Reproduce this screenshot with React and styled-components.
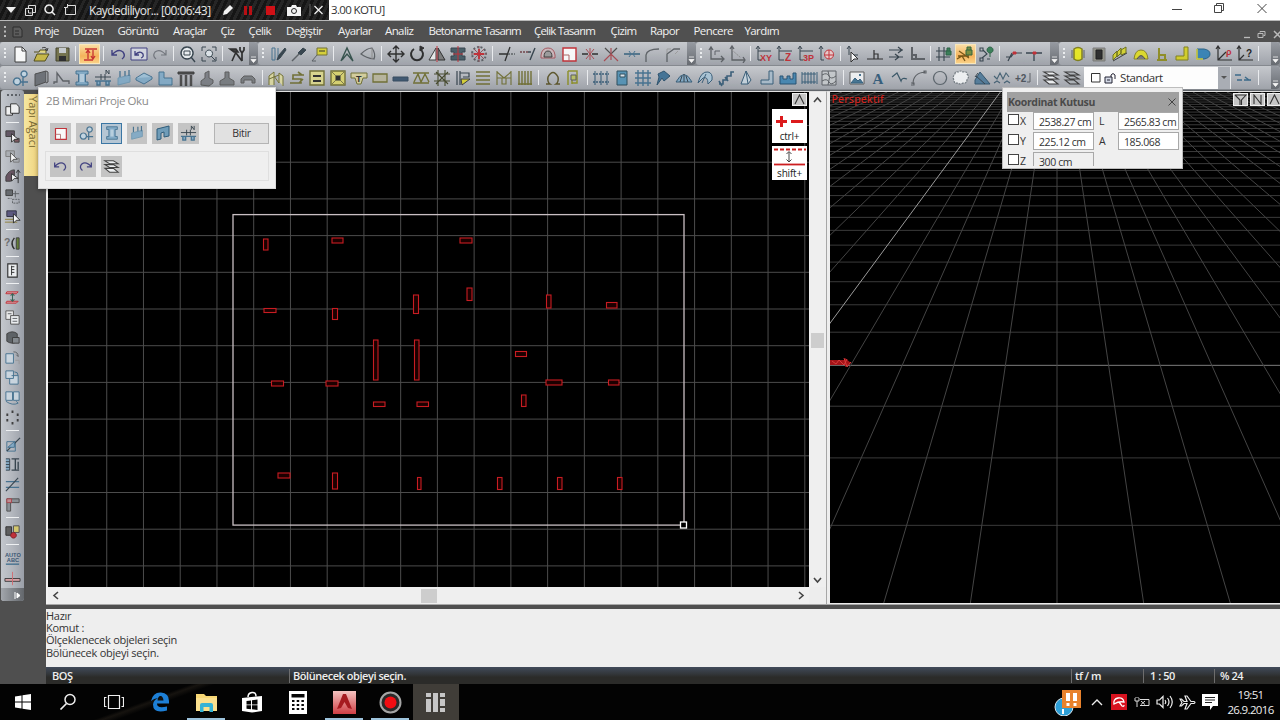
import styled, { createGlobalStyle, css } from "styled-components";

const GlobalStyle = createGlobalStyle`
  * { box-sizing: border-box; }
  body {
    margin: 0;
    overflow: hidden;
    background: #4d4d4d;
    font-family: "Open Sans", "Noto Sans", sans-serif;
  }
  svg { display: block; flex: none; }
`;

const D = "#2c3a44";
const B = "#3d6c8c";
const LB = "#7fa9c6";
const R = "#c2242c";
const Y = "#d9d22c";
const O = "#6b6a2a";
const G = "#55595e";
const N = "none";

// every glyph is a list of [path, stroke, fill, stroke width] or a text mark
const glyphs = {
  newFile: [["M4 2h7l4 4v11h-11z", "#333", "#fff"], ["M11 2v4h4", "#333", N]],
  open: [["M2 7h5l1-2h6v3", "#4a4410", "#e8dc7a"], ["M2 16l3-7h12l-4 7z", "#4a4410", "#c9b93e"], ["M10 3q4-2 5 2m-2-1l2 2l1-3", "#333", N]],
  save: [["M3 3h13v13h-13z", "#3a3a20", "#6f6d44"], ["M6 3h7v5h-7z", N, "#c8ccd0"], ["M6 11h7v5h-7z", N, "#222"]],
  level: [["M4 4h12M3 15h9", R, N, 1.5], ["M7 14v-8m-2 2l2-3l2 3M12 5v8m-2-2l2 3l2-3", R, N, 1.3]],
  undo: [["M3 5v5h5M3 10q6-7 11-3q3 4-1 7", "#35357a", N, 1.4]],
  undoBox: [["M1 3h16v12h-16z", "#35357a", "#d4d8e2"], ["M5 6v4h4M5 10q5-5 8-1q1 3-2 4", "#35357a", N, 1.3]],
  redo: [["M15 5v5h-5M15 10q-6-7-11-3q-3 4 1 7", "#6d7178", N, 1.2]],
  redoBlue: [["M15 5v5h-5M15 10q-6-7-11-3q-3 4 1 7", "#35357a", N, 1.4]],
  zoom: [["M8 2a6 6 0 1 0 .1 0M12 12l4 5", D, "#eef2f5", 1.4], ["M5 6h6v4h-6z", D, N]],
  fit: [["M2 6v-4h4M12 2h4v4M16 12v4h-4M6 16h-4v-4", D, N], ["M9 5a3.5 3.5 0 1 0 .1 0M11 11l4 4", D, "#dfe6ec"]],
  tools: [["M2 4h6l2 3h-4zM4 16l4-9", "#222", "#333", 1.6], ["M8 8l6 8M14 16v-8l-2-3v-3M16 2v3l-2 3", "#222", N, 1.7]],
  section: [["M3 3v12M6 3v12M9 3v12M3 15h3M3 3h3", B, N], ["M8 15l2-5l6-7l1 2l-6 8z", D, D]],
  brush: [["M2 16l7-7", G, N, 1.5], ["M8 8l5-5l3 2l-5 5z", D, D]],
  label: [["M7 3h10v7h-10z", O, Y], ["M7 10l-5 6h4", G, N], ["M9 6h6", "#222", N]],
  angle: [["M3 16l6-13l6 13l-6-7l-5 6", "#2c4a44", N, 1.4]],
  rotate3d: [["M2 9q6-6 11-6q4 6 2 11q-8-1-13-5z", G, N, 1.2], ["M13 3v11", "#888", N]],
  move: [["M9 1v16M1 9h16M6 4l3-3l3 3M6 14l3 3l3-3M4 6l-3 3l3 3M14 6l3 3l-3 3", "#222", N, 1.4]],
  rotate: [["M6 4a6 6 0 1 0 6 0", "#222", N, 2], ["M12 1v5l4-3z", "#222", "#222"]],
  mirror: [["M8 3v12h-7z", "#333", "#eee"], ["M10 3v12h7z", "#222", "#777"], ["M9 1v16", R, N]],
  align: [["M2 3h14v4h-3v4h3v4h-14v-4h3v-4h-3z", D, "#3f5660"], ["M9 1v16M4 9h10", R, N]],
  burst: [["M9 2a7 7 0 1 0 .1 0", G, N, 2, "2 2"], ["M9 1v16M1 9h16M4 4l10 10M14 4l-10 10", "#8a5058", N, 1], ["M9 4v10M4 9h10", R, N, 1.8]],
  trim: [["M1 9h8M7 16l5-14", "#222", N, 1.3], ["M10 9h7", G, N, 1.3, "2 1"]],
  extend: [["M9 7h3M11 15l5-12", D, N, 1.4], ["M1 7h8", "#6b3a40", N, 1.3, "2 1"]],
  offset: [["M2 13h14v-3q-1-7-7-7t-7 7z", "#a35058", "#cdb7bb"], ["M5 12h8q0-6-4-6t-4 6", "#333", "#999"]],
  scale: [["M3 3h13v13h-13z", R, "#fff", 1.4], ["M3 10h6v6", "#aa6060", N]],
  cross: [["M1 9h6M11 9h6", "#222", N, 1.5], ["M5 4l4 5l4-5M5 14l4-5l4 5M9 3v12", "#a8434b", N]],
  xcut: [["M3 3l6 6l6-6", "#444", N, 1.2], ["M2 16l7-7l7 7M9 3v12", "#a8434b", N, 1.2]],
  join: [["M1 9h16", "#2b5a78", N, 1.5], ["M6 6l2 3l-2 3M12 6l-2 3l2 3", B, N]],
  fillet: [["M3 17v-7q1-6 13-6", G, N, 1.3]],
  chamfer: [["M3 17v-8l7-5h6", G, N, 1.3], ["M3 4h4M3 4v4M11 9l3-3", "#999", N]],
  axes: [["M4 3v11h12M2 5l2-3l2 3M14 11l3 3l-3 3", G, N, 1.3], ["M8 10v-4h5", G, N]],
  axes2: [["M4 2v13h13M2 4l2-3l2 3M15 12l2 3l-2 3", G, N, 1.3], ["M4 5l9 8", "#888", N, 1, "2 1"]],
  cxy: [["M3 2v13h3M1 4l2-3l2 3M3 6h13", D, N], { t: "XY", x: 5, y: 16, c: R, s: 9 }],
  cz: [["M3 2v13h5M1 4l2-3l2 3M3 6h13", D, N], { t: "Z", x: 9, y: 16, c: R, s: 10 }],
  c3p: [["M3 2v13h3M1 4l2-3l2 3M3 6h13", D, N], { t: "3P", x: 6, y: 16, c: R, s: 9 }],
  corigin: [["M3 2v13h3M1 4l2-3l2 3", D, N], ["M11 5a4.5 4.5 0 1 0 .1 0M6 10h10M11 5v9", R, "#eecccc"]],
  cursorAxis: [["M4 2v8M2 4l2-3l2 3M8 10h5", D, N], ["M6 7v10l3-3h4z", "#222", "#fff"]],
  ortho: [["M1 14h16M8 14v-9M8 9h4v5", "#222", N, 1.2]],
  parallel: [["M2 5h14M2 12h14M11 2l4 3l-4 3M8 9l4 3l-4 3", D, N, 1.2]],
  corner: [["M4 2v12h13M4 10h4v4", G, N, 2]],
  snapGrid: [["M4 2v14M9 2v14M1 6h12M1 12h14", D, N, 1.1], ["M11 6h5v4h-5zM12 6v-3h3v3", "#1e5a3a", "#2f7a50"]],
  snap: [["M1 14l5-3l3 5M3 6l10 7M2 11h11", "#6b4d10", N, 1.3], ["M10 5h6v5h-6zM11 5v-3h4v3", "#1e5a3a", "#6b8a3c"]],
  snapPoint: [["M3 3h3v3h-3zM3 13h3v3h-3zM10 14h3M6 5l4 4l-5 4", D, N, 1.1], ["M13 2a3 3 0 1 0 .1 0M13 8v4", "#1e5a3a", "#2f7a50"]],
  nodeA: [["M1 12h5l3-4h8M3 16l4-8", D, N, 1.2], ["M8 7h3v2h-3z", R, R]],
  nodeB: [["M1 8h16M9 8v8", D, N, 1.3], ["M8 7h3v2h-3z", R, R]],
  drum: [["M5 4q4-3 8 0v10q-4 3-8 0z", "#7c7a10", "#eaea1a", 1.5], ["M3 5v8M15 5v8", G, N]],
  block: [["M3 3h12v13h-12z", "#777", "#8f8f85"], ["M6 5h6v9h-6z", "#111", "#222"]],
  ribs: [["M2 15v-5l4-4v5zM6 12v-5l4-4v5zM10 10v-5l5-3v6z", "#666a10", "#d6d42a"], ["M2 16l14-8", "#333", N]],
  arch: [["M2 14h14q-1-9-7-9t-7 9z", "#85801a", "#e0dc20"], ["M5 14q4-7 8 0", "#444", "#777"]],
  seat: [["M6 3v7h6v5M6 10v5M4 15h10", "#8c8a1a", N, 2]],
  lshape: [["M11 2h4v13h-12v-4h8z", "#7d7a10", "#d4d020"]],
  dshape: [["M3 4h7q6 1 6 5t-6 5h-7z", "#1f5a80", "#2f7fb4"], ["M3 4v10h6", Y, N, 1.5]],
  plotA: [["M3 2v13h14M3 15l8-8M1 4l2-3l2 3", "#222", N, 1.2], { t: "ρ", x: 11, y: 10, c: R, s: 9 }],
  plotB: [["M3 2v13h14M3 15l5-5M1 4l2-3l2 3", "#222", N, 1.2], { t: "?", x: 10, y: 12, c: "#111", s: 10 }],

  bubble: [["M6 9a3.5 3.5 0 1 0 .1 0M13 2a3 3 0 1 0 .1 0M9 13h8M12 8v9", B, "#c2d6e4", 1.4]],
  panel: [["M3 5l11-3v11l-11 4z", "#444", "#666b70"], ["M14 2l2 1v10l-2 1", "#444", "#94989c"]],
  polyline: [["M2 15v-2h3v-9l6 8h6v3", G, N, 1.3]],
  column: [["M3 2h12v3h-2.500v8h2.500v3h-12v-3h2.500v-8h-2.500z", B, LB], ["M8 5v8M10 5v8", "#e8f0f5", N]],
  beam: [["M1 12h16M3 12v4h3v-4M12 12v4h3v-4", B, LB, 1.4], ["M1 8h16M7 5v6M11 5v6M12 5v-4l3 4v-4", D, N]],
  slabLoad: [["M3 9l12-3v7l-12 3z", "#6a96b0", LB], ["M5 2v6M10 2v5M14 1v6", B, N, 1.3]],
  slab: [["M1 9l8-5l8 4l-8 5z", B, "#9cc0d6"], ["M1 9v2l8 4l8-5v-2", B, LB]],
  lslab: [["M3 3h5v6h8v7h-13z", B, LB]],
  pillars: [["M1 3h16v2h-16z", "#333", "#444"], ["M4 6v11M9 6v11M14 6v11", "#444", N, 2.5]],
  wall3: [["M3 16v-4l4-3v-5l4-2v7l4 2v3l-4 3z", "#555", "#777b80"]],
  footing: [["M7 3h4v6l5 3v4h-14v-4l5-3z", "#555", "#74787c"]],
  bridge: [["M2 14v-4l3-3h8l3 3v4h-3v-3h-8v3z", "#555", "#74787c"]],
  truss: [["M2 16v-9l5-4v13M7 7l5 7v-10l4 3v10M2 10l10-4", O, "#dcd9a0"]],
  stack: [["M2 14h11v-4h-9M5 10v-4h9l-4-3M16 6h-8M11 14l4-4", O, N, 1.6]],
  box2: [["M2 2h14v14h-14z", O, "#dbd78a", 1.4], ["M5 7h8M5 12h8", "#222", N, 2]],
  boxx: [["M2 2h14v14h-14z", O, "#d9d36a", 1.4], ["M2 2l14 14M16 2l-14 14", "#777440", N], ["M7 7h4v4h-4z", "#222", "#222"]],
  tload: [["M1 4h16v5h-4l-2 6h-4l-2-6h-4z", O, "#d5cf9a"], { t: "T", x: 6, y: 13, c: "#222", s: 9 }],
  plate: [["M2 5h14v8h-14z", O, "#b7b49a", 1.3]],
  bar: [["M2 8h15v4h-15z", "#2d4358", "#35506b"]],
  zig: [["M1 4h16M1 14h16M2 13l4-8l3 8l4-8l4 8", O, N, 1.4]],
  grid4: [["M5 1v16M12 1v16M1 5h16M1 12h16M3 3l12 12M15 3l-12 12", "#3c4020", N, 1.1]],
  profile: [["M3 2v14M6 2v14M6 4h9v4h-6", D, N, 1.2], ["M7 10h9l-8 6z", "#333", Y]],
  lines: [["M2 3h14M2 7h14M2 11h14M2 15h14", O, N, 1.5]],
  frame: [["M2 2v14M16 2v14M2 3l7 6l7-6M7 9h4v6h-4zM2 9h5M11 9h5", O, N, 1.1]],
  comb: [["M3 2v14M6 2v14M9 2v14M12 2v14M15 2v14M2 15h14", O, "#e0d98a", 1.4]],
  omega: [["M2 15h4q-3-2-2-7q5-9 10 0q1 5-2 7h4", "#554e20", N, 1.5]],
  green: [["M4 2v14M4 2h9v12h-5M8 6v9", "#8a8d20", N, 1.5], ["M7 6h5v5h-5z", "#555", "#b8c060"]],
  dims: [["M3 5v11M9 5v11M15 5v11", "#2f5672", N, 1.1], ["M1 5h16M1 13h16", "#2f5672", N, 1.3, "2 1"], ["M3 2v3M9 2v3M15 2v3", "#2f5672", N]],
  door: [["M4 2h10v14h-10z", "#245", "#4f90b4"], ["M7 5h5v3h-5z", "#245", "#dfe8ee"]],
  mesh: [["M4 1v16M9 1v16M14 1v16M1 4h16M1 9h16M1 14h16", B, N, 1.4]],
  pin: [["M4 5l6-3l6 5l-6 5l-2-3l-5 7l2-8z", "#234a66", "#396d92"]],
  dome: [["M1 13q8-15 16 0z", "#2f5672", LB], ["M5 13l2-6M9 13v-8M13 13l-2-6", D, N]],
  vault: [["M2 14q3-12 10-11q5 1 4 8l-4 4q0-8-5-6zM6 14l4-9", "#2f5672", "#a8c4d6"]],
  stairs: [["M2 15h4v-4h4v-4h4v-4h3M2 12l3 5M8 8l3 4", "#2f5672", N, 1.6]],
  cone: [["M9 2l-5 13h7zM9 2l5 9l-3 4", "#2f5672", "#c6d4de"]],
  elbow: [["M11 2h4v13h-12v-4h8z", "#2f5672", "#a8bccb"]],
  factory: [["M1 15v-8h3v3h4v-3h3v3h3v-6h3v11z", "#1d4b6c", "#3f83b0"]],
  fence: [["M2 3v12M5 3v12M8 3v12M11 3v12M14 3v12M17 3v12M2 5h14M2 13h14", "#2f5672", N]],
  terrain: [["M2 2h14v14h-14z", G, "#c5c9cc"], ["M2 6q5-3 7 1t7 0M2 12q5-3 7 1t7-1M8 2q3 6 0 14", G, N]],
  image: [["M2 3h14v12h-14z", "#555", "#f2f4f6"], ["M3 14l4-5l3 3l2-2l3 4z", "#2a5878", "#3d7090"], ["M12 5v2", B, N, 2]],
  letterA: [{ t: "A", x: 3.5, y: 15, c: "#2b5676", s: 15, serif: true }],
  curve: [["M2 8l5-4l4 8q1-4 6-2", "#2f4f60", N, 1.2]],
  arc: [["M3 15q0-11 12-12M1 14h3v2h-3M14 2h2v2h-2z", G, N, 1.1]],
  circle: [["M9 2.500a6.500 6.500 0 1 0 .1 0", "#555f66", N, 1.2]],
  cloud: [["M3 5q0-3 3-2q3-2 5 0q4-1 4 2q3 3 0 5q0 5-4 4q-3 2-5 0q-4 1-4-3q-2-3 1-6", "#6c757c", "#f2f4f6", 1.2, "2 1"]],
  hatch: [["M2 15v-4l5-8l10 12z", "#284c66", "#4d7898"], ["M3 7l9 8M5 4l-3 4", D, N]],
  wave: [["M1 7l3 3l3-6l3 6l3-6l3 4M1 14l3-2l3 2M11 14l3-2l3 2", "#3c5b6e", N, 1.1]],
  plus2: [{ t: "+2", x: 1, y: 13, c: "#444c54", s: 10 }, ["M16 4v9h-3", G, N]],
  layers: [["M2 3h9l5 3h-9zM2 7h9l5 3h-9zM2 11h9l5 4h-9z", "#333", "#f2f4f6", 1.1]],
  layersDark: [["M2 3h9l5 3h-9zM2 7h9l5 3h-9zM2 11h9l5 4h-9z", "#333", "#aeb3b8", 1.1]],
  dash: [["M1 6h6M3 11h5M10 11h7M11 8l4 3", "#2f6385", N, 1.3]],

  copyPages: [["M2 6h7v9h-7z", "#222", "#f6f6f6"], ["M7 3h6l3 3v7h-9z", "#222", "#f6f6f6"]],
  selectBlock: [["M2 3h9v6h-9z", "#333", "#5a4d5c"], ["M11 11h5v4h-5z", "#333", "#7a5058"], ["M8 6v9l3-3h4z", "#222", "#fff"]],
  selectLight: [["M2 3h9v6h-9zM10 11h6v4h-6z", "#777", "#a9adb2"], ["M7 5v10l3-3h4z", "#444", "#fff"]],
  selectUp: [["M2 9q3-7 9-7v6l-4 6h-5z", "#333", "#604a58"], ["M15 3v13M13 5l2-3l2 3", "#222", N], ["M8 6v8l3-3h4z", "#222", "#fff"]],
  copyMove: [["M2 2h7v6h-7z", "#333", "#5e6266"], ["M9 12h7v4h-7zM4 11h4", G, N, 1, "2 1"], ["M12 3v7M9 6h7", G, N]],
  cursorBlock: [["M3 3h10v6h-10z", "#223", "#54507a"], ["M1 12h13M1 15h13", "#8b7b30", N], ["M10 6v10l3-3h4z", "#222", "#fff"]],
  query: [{ t: "?", x: 0, y: 12, c: "#666", s: 11 }, ["M11 3q-5 6 0 12", "#222", N, 1.5], ["M13 3h3v12h-3z", "#333", "#5d7a2a"]],
  ruler: [["M4 2h10v14h-10z", "#222", "#f2f4f6", 1.2], ["M8 5h3M8 8h3M8 11h3M8 4v10", "#222", N]],
  story: [["M3 3h12l-2 2h-11zM3 13h12l-2 2h-11z", R, "#dba0a4"], ["M9 5v8M7 7l2-2l2 2M7 11l2 2l2-2", "#2c5c4c", N, 1.1]],
  pages: [["M2 2h8v9h-8z", "#555", "#eee"], ["M7 7h9v9h-9z", "#444", "#f2f4f6"], ["M9 10h5M9 13h5M4 5h4", G, N]],
  bucket: [["M3 5q6-4 11 0v8q-5 4-11 0z", "#333", "#555a5e"], ["M9 9h7v6h-7z", "#333", "#80868b"]],
  pageTurn: [["M2 5h8v10h-8z", B, "#ccd8e2"], ["M10 3q5 0 5 5l-2-2", G, N], ["M12 12h4v4", "#999", N]],
  pageSwap: [["M2 2h8v8h-8zM8 7h7v9h-9v-6", B, "#ccd8e2"], ["M11 3q4 0 4 4", B, N]],
  pageMirror: [["M2 3h7v9h-7zM10 3h6v9h-6z", B, "#ccd8e2"], ["M2 13q7 5 13 2l-2-2", B, N]],
  polar: [["M8 3h2M8 15h2M2.500 6h2M13.500 6h2M2.500 12h2M13.500 12h2", "#333", N, 2.6]],
  sweep: [["M3 6h9v10h-9z", B, N], ["M3 16l14-14", D, N, 1.3], ["M4 12l7-6v6z", B, LB]],
  textCol: [["M2 3h4v12h-4M2 6h4M2 9h4M2 12h4", D, LB], ["M8 3h8M8 15h8M12 3v12M15 6v8", D, N, 1.4]],
  split: [["M2 6h14M2 12h14", B, N, 1.4], ["M2 16l13-14", D, N, 1.2]],
  tee: [["M3 3h13v4h-9v9h-4z", "#444", "#878d93"], ["M3 3h5v4h-5z", "#a53840", "#c08a90"]],
  beads: [["M2 4h6v9h-6z", "#222", "#555"], ["M10 3h6v7h-6z", "#444", "#d8ca66"], ["M10 10a3 3 0 1 0 .1 0", "#7a1018", "#c2242c"]],
  autoAbc: [{ t: "AUTO", x: 1, y: 7, c: "#2f4f6e", s: 6 }, { t: "ABC", x: 3, y: 13, c: "#2f4f6e", s: 6 }, ["M2 15h14", B, N, 1.5]],
  levelLine: [["M1 9h16v3h-16z", "#333", "#dba0a4"], ["M9 2v14", "#d4666c", N]],
};

const GlyphSvg = styled.svg`
  opacity: 0.9;
`;

const Glyph = ({ name, size = 18 }) => (
  <GlyphSvg width={size} height={size} viewBox="0 0 18 18">
    {glyphs[name].map((g, i) =>
      Array.isArray(g) ? (
        <path key={i} d={g[0]} stroke={g[1]} fill={g[2]} strokeWidth={g[3] || 1} strokeDasharray={g[4]} />
      ) : (
        <text key={i} x={g.x} y={g.y} fill={g.c} fontSize={g.s} fontWeight="700"
          fontFamily={g.serif ? "Liberation Serif, serif" : "Liberation Sans, sans-serif"}>
          {g.t}
        </text>
      )
    )}
  </GlyphSvg>
);

const Screen = styled.div`
  width: 1280px;
  height: 720px;
  display: flex;
  flex-direction: column;
  overflow: hidden;
  position: relative;
  background: #4f4f4f;
`;

/* title bar */
const TitleBar = styled.div`
  height: 21px;
  flex: none;
  display: flex;
  background: #fff;
  border-bottom: 1px solid #b9b9b9;
  font-size: 12px;
  color: #333;
`;
const Recorder = styled.div`
  width: 329px;
  height: 20px;
  flex: none;
  display: flex;
  align-items: center;
  background: repeating-linear-gradient(115deg, #151515 0 3px, #262626 3px 6px);
  color: #e6e6e6;
`;
const RecorderSlot = styled.div`
  width: ${(p) => p.$w}px;
  flex: none;
  display: flex;
  justify-content: center;
`;
const RecorderText = styled.div`
  width: 134px;
  flex: none;
  padding-left: 11px;
  font-size: 12px;
  letter-spacing: -0.58px;
  white-space: nowrap;
`;
const FileName = styled.div`
  flex: 1;
  padding-left: 2px;
  line-height: 19px;
  font-size: 11.5px;
  letter-spacing: -0.65px;
`;
const WindowButtons = styled.div`
  display: flex;
  width: 130px;
  justify-content: space-between;
  padding: 2px 13px 0 22px;
`;

/* menu */
const MenuBar = styled.div`
  height: 21px;
  flex: none;
  display: flex;
  align-items: center;
  background: #505050;
  color: #f0f0f0;
  font-size: 11.5px;
  letter-spacing: -0.6px;
`;
const MenuStart = styled.div`
  width: 34px;
  padding-left: 4px;
  display: flex;
  align-items: center;
  gap: 6px;
`;
const MenuItem = styled.div`
  width: ${(p) => p.$w}px;
  white-space: nowrap;
  line-height: 16px;
  padding-bottom: 2px;
  letter-spacing: ${(p) => p.$ls || -0.6}px;
`;
const MdiButtons = styled.div`
  margin-left: auto;
  display: flex;
  gap: 6px;
  padding-top: 5px;
  margin-right: -2px;
`;

/* toolbars */
const ToolRow = styled.div`
  height: 24px;
  flex: none;
  display: flex;
  background: #85898f;
`;
const Bar = styled.div`
  width: ${(p) => p.$w}px;
  height: 23px;
  flex: none;
  display: flex;
  align-items: center;
  background: linear-gradient(#c6c9cd, #b5b8be 45%, #9fa3aa);
  border-radius: 3px 4px 4px 3px;
  overflow: hidden;
`;
const Grip = styled.div`
  width: ${(p) => p.$w || 9}px;
  height: 13px;
  flex: none;
  background: radial-gradient(circle at 5px 2px, #eef0f2 0.7px, #5d6167 1px, transparent 1.5px) 0 0 / 9px 4px repeat-y;
`;
const Tool = styled.div`
  width: ${(p) => p.$w}px;
  height: 20px;
  flex: none;
  display: flex;
  align-items: center;
  justify-content: center;
  ${(p) =>
    p.$on &&
    css`
      background: linear-gradient(#fbe0a8, #f5b35c 60%, #fbd58c);
      box-shadow: inset 0 0 0 1px #f8e7bb;
    `}
`;
const Sep = styled.div`
  width: 7px;
  height: 15px;
  flex: none;
  background: linear-gradient(#e9ebee, #e9ebee) 3px 0 / 1px 100% no-repeat;
`;
const More = styled.div`
  margin-left: auto;
  width: 9px;
  height: 23px;
  flex: none;
  display: flex;
  align-items: flex-end;
  justify-content: center;
  padding-bottom: 2px;
  background: linear-gradient(#979ba2, #676b71);
`;
const Combo = styled.div`
  width: 147px;
  height: 22px;
  margin-left: 2px;
  flex: none;
  display: flex;
  align-items: center;
  gap: 3px;
  padding-left: 7px;
  background: #fdfdfd;
  color: #333;
  font-size: 11.5px;
  letter-spacing: -0.45px;
`;
const ComboArrow = styled.div`
  margin-left: auto;
  width: 13px;
  height: 22px;
  display: flex;
  align-items: center;
  justify-content: center;
  background: #a9adb4;
  border-right: 1px solid #e8eaec;
`;

const barA = "newFile open save | level! | undo undoBox redo | zoom fit | tools";
const barB = "section brush label | angle rotate3d | move rotate mirror align burst | trim extend offset scale cross xcut join fillet chamfer";
const barC = "axes axes2 | cxy cz c3p corigin | cursorAxis ortho parallel corner | snapGrid snap! snapPoint | nodeA nodeB";
const barD = "drum block ribs arch seat lshape dshape plotA plotB |";
const barE =
  "bubble panel polyline column beam slabLoad slab lslab pillars wall3 footing bridge | " +
  "truss stack box2 boxx tload plate bar zig grid4 profile lines frame comb | omega green | " +
  "dims door mesh pin dome vault stairs cone elbow factory fence terrain | " +
  "image letterA curve arc circle cloud hatch wave plus2 | layers layersDark";

const Tools = ({ list, pitch }) =>
  list.split(" ").map((n, i) =>
    n === "|" ? (
      <Sep key={i} />
    ) : (
      <Tool key={i} $w={pitch} $on={n.endsWith("!")}>
        <Glyph name={n.replace("!", "")} />
      </Tool>
    )
  );

const MoreMark = () => (
  <More>
    <svg width="7" height="7" viewBox="0 0 7 7">
      <path d="M1 1h5M1 3.500h5l-2.500 3z" stroke="#f4f4f4" fill="#f4f4f4" strokeWidth="0.8" />
    </svg>
  </More>
);

/* work area */
const Work = styled.div`
  height: 594px;
  flex: none;
  display: flex;
`;
const Side = styled.div`
  width: 23px;
  height: 511px;
  margin-left: 1px;
  display: flex;
  flex-direction: column;
  align-items: center;
  background: linear-gradient(90deg, #c3c7cd, #b2b6bd 50%, #9a9fa8);
  border-radius: 3px;
  overflow: hidden;
`;
const SideGrip = styled.div`
  width: 14px;
  height: 9px;
  flex: none;
  background: radial-gradient(circle at 2px 5px, #5d6167 1px, transparent 1.4px) 0 0 / 4px 9px;
`;
const SideTool = styled.div`
  height: 20px;
  flex: none;
  display: flex;
  align-items: center;
`;
const SideSep = styled.div`
  width: 13px;
  height: 1px;
  margin: 3px 0;
  flex: none;
  background: #eef0f2;
`;
const SideMore = styled.div`
  margin-top: auto;
  width: 23px;
  height: 14px;
  flex: none;
  display: flex;
  align-items: center;
  justify-content: flex-end;
  padding-right: 3px;
  background: linear-gradient(90deg, #a2a6ac, #63676c);
`;
const Dock = styled.div`
  width: 22px;
  flex: none;
  padding-top: 4px;
`;
const DockTab = styled.div`
  width: 15px;
  height: 82px;
  padding-top: 2px;
  background: linear-gradient(90deg, #f6e7a0, #eed17c);
  writing-mode: vertical-rl;
  font-size: 11px;
  line-height: 12px;
  color: #7b6b35;
  white-space: nowrap;
`;
const Main = styled.div`
  width: 1234px;
  display: flex;
  flex-direction: column;
`;
const Views = styled.div`
  height: 515px;
  flex: none;
  display: flex;
  background: #ededed;
  border-top: 1px solid #62666b;
  border-bottom: 1px solid #a8a8a8;
`;
const Plan = styled.div`
  width: 780px;
  display: grid;
  grid-template: 495px 1fr / 761px 1fr;
  border-left: 2px solid #f2f2f2;
  border-top: 1px solid #e0e0e0;
  position: relative;
`;
const VScroll = styled.div`
  display: flex;
  flex-direction: column;
  align-items: center;
  justify-content: space-between;
  padding: 4px 1px 3px 0;
  background: #efefef;
`;
const HScroll = styled.div`
  display: flex;
  align-items: center;
  justify-content: space-between;
  padding: 0 4px;
  background: #efefef;
`;
const Thumb = styled.div`
  width: ${(p) => p.$w}px;
  height: ${(p) => p.$h}px;
  background: #cdcdcd;
`;
const Scene = styled.div`
  width: 454px;
  border-left: 1px solid #a6a6a6;
  padding-left: 3px;
  border-top: 1px solid #e0e0e0;
  position: relative;
`;
const HudColumn = styled.div`
  position: absolute;
  top: 1px;
  right: 19px;
  display: flex;
  flex-direction: column;
  align-items: flex-end;
`;
const HudCard = styled.div`
  width: 35px;
  height: 34px;
  margin-bottom: 3px;
  background: #fff;
  color: #222;
  font-size: 10px;
  line-height: 11px;
  letter-spacing: -0.2px;
  text-align: center;
`;
const CornerButtons = styled.div`
  position: absolute;
  top: 1px;
  right: -2px;
  display: flex;
  gap: 2px;
`;
const CornerButton = styled.div`
  width: 15px;
  height: 13px;
  display: flex;
  align-items: center;
  justify-content: center;
  background: #c6c6c6;
  border: 1px solid #f0f0f0;
  ${(p) => p.$gap && `margin-bottom: 3px;`}
`;

const columns = [
  [263.500, 239, 4.500, 11], [332, 238, 11, 5], [460, 238, 12, 5], [467, 288, 5, 12.500],
  [413.500, 295, 5, 18.500], [546.500, 295, 4.500, 13], [606.500, 302.500, 10.500, 5.500], [264, 308.500, 12, 4],
  [332.500, 308.500, 5, 11], [373.500, 340, 4.500, 40], [414.500, 340, 4.500, 40],
  [515.500, 351.500, 11, 5], [546, 380, 16, 5], [608.500, 380, 10.500, 5], [271.500, 381, 12, 5],
  [326, 381, 12, 5], [373.500, 402, 11.500, 4.500], [417, 402, 11.500, 4.500], [521.500, 395, 4.500, 11.500],
  [278, 473, 12, 5], [332.500, 473, 5, 16], [417.500, 477.500, 3.500, 12],
  [497.500, 477.500, 4.500, 12], [557.500, 477.500, 4.500, 12], [617.500, 477.500, 4.500, 12],
];

const range = (a, b) => Array.from({ length: b - a + 1 }, (_, i) => a + i);

const PlanDrawing = () => (
  <svg width="761" height="495" viewBox="48 92 761 495" style={{ background: "#000" }}>
    <path
      d={
        range(0, 20).map((i) => `M${70 + i * 36.740} 92v495`).join("") +
        range(0, 12).map((i) => `M48 ${125.500 + i * 36.700}h762`).join("")
      }
      stroke="#4c4c4c"
      fill="none"
    />
    {columns.map(([x, y, w, h]) => (
      <rect key={`${x}-${y}`} x={x} y={y} width={w} height={h} fill="#1c0000" stroke="#c81c22" strokeWidth="1.100" />
    ))}
    <rect x="233" y="214.600" width="451" height="310.500" fill="none" stroke="#c9bfc3" strokeWidth="1.300" />
    <rect x="680.500" y="522" width="6" height="6" fill="#000" stroke="#fff" strokeWidth="1.300" />
  </svg>
);

// ground grid seen from above: vanishing point and depth constants
const VX = 1057;
const VY = 15.2;
const rowY = (k) => VY + 3349 / (9.565 + k);
const gridX = (n, y) => VX + (51.6 * n * (y - VY)) / 350.1;

const SceneDrawing = () => (
  <svg width="450" height="511" viewBox="830 92 450 511" style={{ background: "#000" }}>
    {range(-3, 33).map((k) => (
      <path key={k} d={`M830 ${rowY(k)}H1280`} stroke={k === 0 ? "#7c7c7c" : "#3a3a3a"} />
    ))}
    {range(-22, 22).map((n) => (
      <path key={n} d={`M${gridX(n, 92)} 92L${gridX(n, 603)} 603`}
        stroke={n === -5 ? "#9a9a9a" : "#444"} />
    ))}
    <path d="M830 360h15v-2l6 5l-6 4v-2h-15z" fill="#a31418" />
    <path d="M832 361l4 3l3-4l5 5l3-6M844 358l3 9l4-5" stroke="#d83a3c" fill="none" />
    <text x="831.500" y="103" fontSize="10.500" fill="#e0231c" fontFamily="Noto Sans, sans-serif"
      textLength="52">Perspektif</text>
  </svg>
);

const Chevron = ({ d }) => (
  <svg width="9" height="9" viewBox="0 0 9 9">
    <path d={d} stroke="#444" strokeWidth="1.600" fill="none" />
  </svg>
);
const CornerGlyph = ({ d }) => (
  <svg width="13" height="11" viewBox="0 0 13 11">
    <path d={d} stroke="#333" strokeWidth="1.100" fill="none" />
  </svg>
);

/* bottom */
const Output = styled.div`
  height: 58px;
  flex: none;
  margin-top: 4px;
  padding: 1px 0 0;
  background: #eee;
  color: #333;
  font-size: 11px;
  line-height: 12.200px;
  letter-spacing: -0.260px;
`;
const StatusBar = styled.div`
  flex: 1;
  display: flex;
  align-items: center;
  background: linear-gradient(#414a5a, #33373b 40%, #2b2b29 60%);
  color: #eee;
  font-size: 11px;
  font-weight: 600;
  letter-spacing: -0.450px;
`;
const StatusCell = styled.div`
  width: ${(p) => p.$w}px;
  height: 14px;
  line-height: 14px;
  padding-left: ${(p) => p.$pad || 3}px;
  border-left: ${(p) => (p.$first ? "none" : "1px solid #6d6d6d")};
`;

/* taskbar */
const TaskBar = styled.div`
  height: 36px;
  flex: none;
  display: flex;
  align-items: stretch;
  background:
    linear-gradient(160deg, transparent 0 44%, #16130f 47%, transparent 52%) 60px 0 / 200px 100% no-repeat,
    #030303;
`;
const TaskItem = styled.div`
  width: ${(p) => p.$w || 46}px;
  display: flex;
  align-items: center;
  justify-content: center;
  background: ${(p) => (p.$active ? "#403d38" : "transparent")};
  ${(p) =>
    p.$open &&
    css`
      background: linear-gradient(#9dc3dc, #9dc3dc) center bottom / 38px 2px no-repeat;
    `}
`;
const Tray = styled.div`
  margin-left: auto;
  display: flex;
  align-items: center;
`;
const TraySlot = styled.div`
  width: ${(p) => p.$w || 22.6}px;
  display: flex;
  justify-content: center;
`;
const Clock = styled.div`
  width: 59px;
  color: #eee;
  font-size: 11.5px;
  line-height: 15.500px;
  letter-spacing: -0.650px;
  text-align: center;
`;

/* floating windows */
const ImportPanel = styled.div`
  position: absolute;
  left: 38px;
  top: 87px;
  width: 238px;
  height: 102px;
  background: #efefef;
  border: 1px solid #d9d9d9;
  box-shadow: 0 1px 4px rgba(0, 0, 0, 0.4);
`;
const ImportTitle = styled.div`
  height: 28px;
  padding-left: 7px;
  line-height: 26px;
  background: #fff;
  color: #8b8b8b;
  font-size: 11.5px;
  letter-spacing: -0.450px;
`;
const ImportTools = styled.div`
  display: flex;
  align-items: center;
  height: 34px;
  padding-left: 11px;
  gap: 4.900px;
`;
const ImportLower = styled.div`
  display: flex;
  align-items: center;
  height: 30px;
  margin: 1px 6px 0 6px;
  padding-left: 4px;
  gap: 4.900px;
  border: 1px solid #dfdfdf;
`;
const ImportButton = styled.div`
  width: 20.700px;
  height: 21px;
  display: flex;
  align-items: center;
  justify-content: center;
  background: ${(p) => (p.$on ? "#b5c6d4" : "#c4c4c4")};
  border: ${(p) => (p.$on ? "1px solid #3a76a4" : "none")};
`;
const FinishButton = styled.div`
  width: 55px;
  height: 21px;
  margin-left: 10.500px;
  background: #e1e1e1;
  border: 1px solid #b4b4b4;
  color: #333;
  font-size: 10.5px;
  line-height: 19px;
  letter-spacing: -0.350px;
  text-align: center;
`;
const CoordPanel = styled.div`
  position: absolute;
  left: 1002px;
  top: 87px;
  width: 181px;
  height: 82px;
  padding: 4px 3px 0 4px;
  background: #efefef;
  border: 1px solid #bdbdbd;
`;
const CoordTitle = styled.div`
  height: 20px;
  display: flex;
  align-items: center;
  justify-content: space-between;
  padding: 0 3px 1px 1px;
  background: #a0a0a0;
  color: #4a4a4a;
  font-size: 10.5px;
  font-weight: 700;
  letter-spacing: -0.350px;
`;
const CoordGrid = styled.div`
  display: grid;
  grid-template-columns: 26px 61px 24px 61px;
  grid-template-rows: 20px 20px 14px;
  color: #333;
  font-size: 10.5px;
  letter-spacing: -0.400px;
`;
const CoordAxis = styled.div`
  display: flex;
  align-items: flex-start;
  padding-top: 2px;
  line-height: 15px;
`;
const Check = styled.span`
  width: 11px;
  height: 11px;
  flex: none;
  margin: 0 1px 0 1px;
  background: #fff;
  border: 1px solid #444;
`;
const CoordValue = styled.div`
  height: 18px;
  padding-left: 5px;
  line-height: 18px;
  white-space: nowrap;
  background: #fff;
  border: 1px solid #a8a8a8;
  ${(p) =>
    p.$off &&
    css`
      height: 14px;
      background: #efefef;
      border-bottom: none;
    `}
`;
const CoordName = styled.div`
  padding-left: 5px;
  line-height: 19px;
`;

const menus = [
  ["Proje", 38.5], ["Düzen", 45], ["Görüntü", 55.5], ["Araçlar", 47.5], ["Çiz", 28], ["Çelik", 37.5],
  ["Değiştir", 52], ["Ayarlar", 47], ["Analiz", 43.5], ["Betonarme Tasarım", 105.5, -0.8],
  ["Çelik Tasarım", 76.5, -0.8], ["Çizim", 39.5], ["Rapor", 43.5], ["Pencere", 51], ["Yardım", 40],
];

const sideTools =
  "copyPages | selectBlock selectLight selectUp copyMove cursorBlock | query | ruler | " +
  "story pages bucket pageTurn pageSwap pageMirror polar | sweep textCol split tee | beads | autoAbc levelLine";

function App() {
  return (
    <>
      <GlobalStyle />
      <Screen>
        <TitleBar>
          <Recorder>
            <RecorderSlot $w={22}><svg width="10" height="8"><path d="M0 1h10l-5 6z" fill="#eee" /></svg></RecorderSlot>
            <RecorderSlot $w={16}><svg width="11" height="11"><path d="M3.500 3.500v-3h7v7h-3M.5 3.500h7v7h-7zM3.500 5v3h3" stroke="#ddd" fill="none" /></svg></RecorderSlot>
            <RecorderSlot $w={24}><svg width="12" height="12"><path d="M5 1a4 4 0 1 0 .1 0M8 8l3 3" stroke="#eee" strokeWidth="1.500" fill="none" /></svg></RecorderSlot>
            <RecorderSlot $w={16}><svg width="13" height="12"><path d="M3.500 1.500h8v9h-10v-7M3.500 0v3.500h-3.500" stroke="#ddd" fill="none" /></svg></RecorderSlot>
            <RecorderText>Kaydediliyor... [00:06:43]</RecorderText>
            <RecorderSlot $w={32}><svg width="13" height="12"><path d="M1 11l1-4l6-6l3 3l-6 6z" fill="#f2f2f2" /></svg></RecorderSlot>
            <RecorderSlot $w={8}><svg width="8" height="9"><path d="M1.500 0v9M6.500 0v9" stroke="#b80f14" strokeWidth="3" /></svg></RecorderSlot>
            <RecorderSlot $w={36}><svg width="9" height="9"><path d="M0 0h9v9h-9z" fill="#d01016" /></svg></RecorderSlot>
            <RecorderSlot $w={12}><svg width="14" height="11"><path d="M0 2h4l1-2h4l1 2h4v9h-14z" fill="#f2f2f2" /><circle cx="7" cy="6" r="2.500" fill="#f2f2f2" stroke="#222" /></svg></RecorderSlot>
            <RecorderSlot $w={29}><svg width="26" height="12"><path d="M8 0v12" stroke="#666" /><path d="M12.500 2l8 8M20.500 2l-8 8" stroke="#eee" strokeWidth="1.300" /></svg></RecorderSlot>
          </Recorder>
          <FileName>3.00 KOTU]</FileName>
          <WindowButtons>
            <svg width="10" height="12"><path d="M0 7.500h10" stroke="#444" /></svg>
            <svg width="11" height="12"><path d="M2.500 3v-1.500h7v7h-2M.5 3.500h7v7h-7z" stroke="#444" fill="none" /></svg>
            <svg width="10" height="12"><path d="M.5 2l9 9M9.500 2l-9 9" stroke="#444" /></svg>
          </WindowButtons>
        </TitleBar>

        <MenuBar>
          <MenuStart>
            <svg width="2" height="12"><path d="M1 0v12" stroke="#ddd" strokeWidth="1.500" strokeDasharray="2 2.500" /></svg>
            <svg width="11" height="12"><path d="M1 1h7l2 3v7h-9zM3 5h4M3 8h4" stroke="#2d2d2d" fill="#5c5c5c" /></svg>
          </MenuStart>
          {menus.map(([name, w, ls]) => <MenuItem key={name} $w={w} $ls={ls}>{name}</MenuItem>)}
          <MdiButtons>
            <svg width="9" height="9"><path d="M2 7.500h6" stroke="#bbb" strokeWidth="1.300" /></svg>
            <svg width="10" height="9"><path d="M3 2.500v-1h5v4h-1.500M1 3.500h5v4h-5z" stroke="#bbb" fill="none" /></svg>
            <svg width="9" height="9"><path d="M1 1l7 7M8 1l-7 7" stroke="#bbb" strokeWidth="1.500" /></svg>
          </MdiButtons>
        </MenuBar>

        <ToolRow>
          <Bar $w={258}><Grip /><Tools list={barA} pitch={21} /><MoreMark /></Bar>
          <Bar $w={438}><Grip $w={9.5} /><Tools list={barB} pitch={20.8} /><MoreMark /></Bar>
          <Bar $w={363}><Grip $w={9.5} /><Tools list={barC} pitch={20.75} /><MoreMark /></Bar>
          <Bar $w={221}><Grip /><Tools list={barD} pitch={20.8} /><MoreMark /></Bar>
        </ToolRow>
        <ToolRow>
          <Bar $w={1280}>
            <Grip $w={9.6} />
            <Tools list={barE} pitch={20.75} />
            <Combo>
              <svg width="10" height="10"><path d="M.5 .5h8.500v8.500h-8.500z" stroke="#333" fill="#fff" /></svg>
              <svg width="13" height="12"><path d="M1 5h7v6h-7z" stroke="#223" fill="#d4dae6" /><path d="M7 5v-2q2-3 4 0v4M3 8h3" stroke="#223" fill="none" /></svg>
              <span>Standart</span>
              <ComboArrow><svg width="6" height="4"><path d="M0 0h6l-3 3z" fill="#555" /></svg></ComboArrow>
            </Combo>
            <Tools list="dash |" pitch={24} />
            <MoreMark />
          </Bar>
        </ToolRow>

        <Work>
          <Side>
            <SideGrip />
            {sideTools.split(" ").map((n, i) =>
              n === "|" ? <SideSep key={i} /> : <SideTool key={i}><Glyph name={n} size={17} /></SideTool>
            )}
            <SideMore><svg width="7" height="7"><path d="M1 0v7M3 1l3 2.500l-3 2.500z" stroke="#fff" fill="#fff" /></svg></SideMore>
          </Side>
          <Dock><DockTab>Yapı Ağacı</DockTab></Dock>
          <Main>
            <Views>
              <Plan>
                <PlanDrawing />
                <VScroll>
                  <Chevron d="M1 6l3.500-4l3.500 4" />
                  <Thumb $w={13} $h={15} />
                  <Chevron d="M1 3l3.500 4l3.500-4" />
                </VScroll>
                <HScroll>
                  <Chevron d="M6 1l-4 3.500l4 3.500" />
                  <Thumb $w={16} $h={14} />
                  <Chevron d="M3 1l4 3.500l-4 3.500" />
                </HScroll>
                <HudColumn>
                  <CornerButton $gap><CornerGlyph d="M2 10l4.500-9l4.500 9" /></CornerButton>
                  <HudCard>
                    <svg width="35" height="22"><path d="M4 12.500h11M9.500 7v11M19 12.500h12" stroke="#dc1a1c" strokeWidth="3" /></svg>
                    ctrl+
                  </HudCard>
                  <HudCard>
                    <svg width="35" height="22"><path d="M2 3.500h32" stroke="#cc1e20" strokeWidth="1.800" strokeDasharray="4 2" /><path d="M2 18.500h31" stroke="#cc1e20" strokeWidth="1.800" /><path d="M17 6v10M14.500 8l2.500-2.500l2.500 2.500M14.500 13.500l2.500 2.500l2.500-2.500" stroke="#444" fill="none" /></svg>
                    shift+
                  </HudCard>
                </HudColumn>
              </Plan>
              <Scene>
                <SceneDrawing />
                <CornerButtons>
                  <CornerButton><CornerGlyph d="M1 1h11l-4.500 5v5M1 1l5 5M6 6v5" /></CornerButton>
                  <CornerButton><CornerGlyph d="M3 10v-9l7 9v-9" /></CornerButton>
                  <CornerButton><CornerGlyph d="M2 10l4.500-9l4.500 9" /></CornerButton>
                </CornerButtons>
              </Scene>
            </Views>
            <Output>
              <div>Hazır</div>
              <div>Komut :</div>
              <div>Ölçeklenecek objeleri seçin</div>
              <div>Bölünecek objeyi seçin.</div>
            </Output>
            <StatusBar>
              <StatusCell $w={243} $pad={6} $first>BOŞ</StatusCell>
              <StatusCell $w={782}>Bölünecek objeyi seçin.</StatusCell>
              <StatusCell $w={72}>tf / m</StatusCell>
              <StatusCell $w={71} $pad={6}>1 : 50</StatusCell>
              <StatusCell $w={66} $pad={5}>% 24</StatusCell>
            </StatusBar>
          </Main>
        </Work>

        <TaskBar>
          <TaskItem $w={45}>
            <svg width="16" height="16"><path d="M0 2.500l6.500-1v6h-6.500zM7.500 1.300l8.500-1.300v7.500h-8.500zM0 8.500h6.500v6l-6.500-1zM7.500 8.500h8.500v7.500l-8.500-1.300z" fill="#fff" /></svg>
          </TaskItem>
          <TaskItem>
            <svg width="18" height="18"><circle cx="11" cy="6.500" r="5" stroke="#eee" strokeWidth="1.500" fill="none" /><path d="M7.500 10.500l-6 6" stroke="#eee" strokeWidth="1.700" /></svg>
          </TaskItem>
          <TaskItem>
            <svg width="20" height="16"><path d="M4.500 1.500h11v13h-11zM2.500 3.500h-2v9h2M17.500 3.500h2v9h-2" stroke="#eee" strokeWidth="1.200" fill="none" /></svg>
          </TaskItem>
          <TaskItem>
            <svg width="20" height="20"><path d="M1 9Q3 0 11 .5Q19 1 19 9v2.500H7Q7 17 17 14.500v4Q3 22 3 12.500Q3.500 8 8 6Q4 6.500 1 9zM7.500 8.500h6Q13 4 10.500 4Q8 4 7.500 8.500z" fill="#1d7fd6" fillRule="evenodd" /></svg>
          </TaskItem>
          <TaskItem $open>
            <svg width="21" height="19"><path d="M0 1h8l2 2h11v15h-21z" fill="#f7d774" /><path d="M0 5h21v13h-21z" fill="#fbe08e" /><path d="M4 19v-7q0-2 2-2h9q2 0 2 2v7h-3.500v-5h-6v5z" fill="#35b3d6" /></svg>
          </TaskItem>
          <TaskItem>
            <svg width="20" height="22"><path d="M0 7l20-2v15l-10 1.500l-10-1.500z" fill="#fff" /><path d="M6 6q0-4 4-4.500t4 4" stroke="#fff" strokeWidth="1.500" fill="none" /><path d="M4.500 10l4.500-.6v4h-4.500zM10 9.300l5.500-.7v4.800h-5.500zM4.500 14.300h4.500v4l-4.500-.6zM10 14.300h5.500v4.700l-5.500-.7z" fill="#060606" /></svg>
          </TaskItem>
          <TaskItem>
            <svg width="18" height="23"><path d="M0 0h18v23h-18z" fill="#fff" /><path d="M2.500 3h13v3.500h-13z" fill="#060606" /><path d="M3 10h12M3 14h12M3 18h12" stroke="#060606" strokeWidth="2" strokeDasharray="2.500 2.200" /></svg>
          </TaskItem>
          <TaskItem $open>
            <svg width="23" height="23"><defs><linearGradient id="acad" x1="0" y1="0" x2="0" y2="1"><stop offset="0" stopColor="#f4c3c0" /><stop offset="1" stopColor="#cf3f45" /></linearGradient></defs><path d="M0 0h23v23h-23z" fill="url(#acad)" /><path d="M10 3h3l6 15l-4-1l-3.500-6l-3.500 6l-4 1z" fill="#a61b20" /></svg>
          </TaskItem>
          <TaskItem $open>
            <svg width="23" height="23"><circle cx="11.500" cy="11.500" r="10" fill="#2a2a2a" stroke="#a5a5a5" strokeWidth="2" /><circle cx="11.500" cy="11.500" r="6" fill="#f20d12" /></svg>
          </TaskItem>
          <TaskItem $active>
            <svg width="20" height="19"><path d="M0 0h5v4h-5zM0 6h5v13h-5zM7 0h5v19h-5zM14 0h5v4h-5zM14 6h5v7h-5zM14 15h5v4h-5z" fill="#c6c6c6" /></svg>
          </TaskItem>
          <Tray>
            <TraySlot $w={34}>
              <svg width="28" height="28"><circle cx="10" cy="19" r="9" fill="#2d9fd8" stroke="#dbeaf2" /><path d="M8 2h19v18h-19z" fill="#e8822c" /><path d="M14 5v8M21 5v8" stroke="#fff" strokeWidth="4" /><path d="M14 15v3M21 15v3" stroke="#fff" strokeWidth="3" /><path d="M9 21v5" stroke="#fff" strokeWidth="2" /></svg>
            </TraySlot>
            <TraySlot><svg width="12" height="8"><path d="M1 7l5-5l5 5" stroke="#eee" strokeWidth="1.400" fill="none" /></svg></TraySlot>
            <TraySlot><svg width="16" height="16"><path d="M0 0h16v16h-16z" fill="#d8121f" /><path d="M3 10q-1-5 4-6q5-1 6 4q-5-1-10 2zM8 8l3 4q2 1 2-1" stroke="#fff" strokeWidth="1.300" fill="none" /></svg></TraySlot>
            <TraySlot><svg width="16" height="12"><path d="M6 3.500h9v6h-9M7 5l4 3.500M11 5l-4 3.500M1 2v3h4v-3M3 5v6M2 1v1M4 1v1" stroke="#ddd" fill="none" /></svg></TraySlot>
            <TraySlot><svg width="17" height="14"><path d="M1 5h2.500l3.500-3.500v11l-3.500-3.500h-2.500zM9 5q1.500 2 0 4M11.500 3q3 4 0 8M14 1q4.500 6 0 12" stroke="#eee" fill="none" strokeWidth="1.200" /></svg></TraySlot>
            <TraySlot><svg width="17" height="15"><path d="M1 4l2 3.500l-2 3.500h1.500l2.500-2.500h3l-2 5.500h2l4-5.500h3q2-1 0-2h-3l-4-5.500h-2l2 5.500h-3l-2.500-2.500z" stroke="#eee" fill="none" strokeWidth="1.200" /></svg></TraySlot>
            <TraySlot><svg width="16" height="16"><path d="M0 0h16v12h-5l-3 4v-4h-8z" fill="#fff" /><path d="M3 3.500h10M3 6h10M3 8.500h7" stroke="#222" /></svg></TraySlot>
            <Clock><div>19:51</div><div>26.9.2016</div></Clock>
          </Tray>
        </TaskBar>

        <ImportPanel>
          <ImportTitle>2B Mimari Proje Oku</ImportTitle>
          <ImportTools>
            <ImportButton><Glyph name="scale" size={15} /></ImportButton>
            <ImportButton><Glyph name="bubble" size={16} /></ImportButton>
            <ImportButton $on><Glyph name="column" size={16} /></ImportButton>
            <ImportButton><Glyph name="slabLoad" size={16} /></ImportButton>
            <ImportButton>
              <svg width="16" height="16"><path d="M2 4l12-3v10l-5 1v-5l-3 1v6l-4 1z" fill="#6f9cb8" stroke="#2f5c7a" /></svg>
            </ImportButton>
            <ImportButton><Glyph name="beam" size={17} /></ImportButton>
            <FinishButton>Bitir</FinishButton>
          </ImportTools>
          <ImportLower>
            <ImportButton><Glyph name="undo" size={16} /></ImportButton>
            <ImportButton><Glyph name="redoBlue" size={16} /></ImportButton>
            <ImportButton><Glyph name="layers" size={17} /></ImportButton>
          </ImportLower>
        </ImportPanel>

        <CoordPanel>
          <CoordTitle>
            Koordinat Kutusu
            <svg width="8" height="8"><path d="M.5 .5l7 7M7.500 .5l-7 7" stroke="#444" /></svg>
          </CoordTitle>
          <CoordGrid>
            <CoordAxis><Check />X</CoordAxis><CoordValue>2538.27 cm</CoordValue>
            <CoordName>L</CoordName><CoordValue>2565.83 cm</CoordValue>
            <CoordAxis><Check />Y</CoordAxis><CoordValue>225.12 cm</CoordValue>
            <CoordName>A</CoordName><CoordValue>185.068</CoordValue>
            <CoordAxis><Check />Z</CoordAxis><CoordValue $off>300 cm</CoordValue>
          </CoordGrid>
        </CoordPanel>
      </Screen>
    </>
  );
}

export default App;
